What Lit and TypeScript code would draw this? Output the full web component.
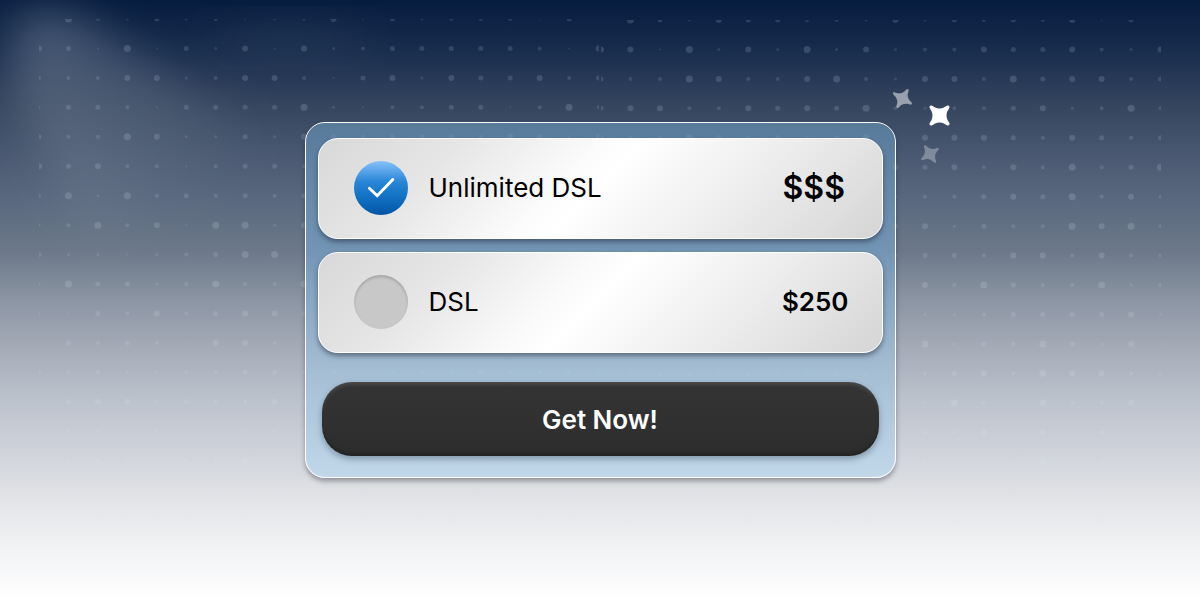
import { LitElement, html, css, svg } from "lit";
import { customElement, property, state } from "lit/decorators.js";

/* Dot sizes, one digit per grid cell, in half pixels of radius; 0 leaves the cell empty. */
const LEFT_DOTS = [
  "07435342336253444250",
  "65272536263455555426",
  "44466346642563655645",
  "35542555573244552474",
  "54476335365455546535",
  "65644245544345345435",
  "47374545454535453545",
  "34746277364535435353",
  "53323457705345345345",
  "37553474474535435345",
  "32546456654353453453",
  "25454266434535345345",
  "44433445545345465454",
  "35663544643545354354",
  "54334334453454354353",
  "45654556445354565435",
  "55434354534543453453",
  "43454344345434543454",
];
const RIGHT_DOTS = [
  "07536554436354546250",
  "66273637363446556436",
  "54476446743664756645",
  "56644656574344563474",
  "54475453570666546545",
  "54354535456564647457",
  "43545354353445657464",
  "54354354355635447674",
  "35435435434554664644",
  "54354354353647544734",
  "43543543543334555563",
  "54354354354735475363",
  "54543544553456476644",
  "43543543543374074463",
  "35435435433547364534",
  "54565434465543573535",
  "43454345345634345543",
  "45434543454345434543",
];
const PITCH = 29.45;

const dots = (rows: string[], x: number, y: number) =>
  rows.flatMap((row, r) =>
    [...row].map((d, c) =>
      d === "0"
        ? null
        : svg`<circle cx=${(x + c * PITCH).toFixed(2)} cy=${(y + r * PITCH).toFixed(2)} r=${Number(d) / 2}
            fill-opacity=${0.09 + Number(d) * 0.011} />`
    )
  );

@customElement("night-backdrop")
class NightBackdrop extends LitElement {
  static styles = css`
    :host {
      position: absolute;
      inset: 0;
      overflow: hidden;
      display: flex;
      justify-content: center;
      background: linear-gradient(
        #061c3f 0%,
        #1a2e4e 9%,
        #36465f 18%,
        #4a5971 26%,
        #5b6a80 34%,
        #6d798a 42%,
        #8b95a3 50%,
        #a5abb7 58%,
        #bac1cb 66%,
        #cfd2da 75%,
        #e1e3e6 83%,
        #f1f2f4 91%,
        #ffffff 100%
      );
    }
    .scene {
      flex: none;
      width: 1200px;
      height: 600px;
    }
  `;

  render() {
    return html`
      <svg class="scene" viewBox="0 0 1200 600" aria-hidden="true">
        <defs>
          <filter id="soft" x="-50%" y="-50%" width="200%" height="200%">
            <feGaussianBlur stdDeviation="22" />
          </filter>
          <linearGradient id="beam" gradientUnits="userSpaceOnUse" x1="30" y1="20" x2="160" y2="220">
            <stop offset="0" stop-color="#dfe8ee" stop-opacity=".28" />
            <stop offset=".35" stop-color="#dfe8ee" stop-opacity=".17" />
            <stop offset=".7" stop-color="#dfe8ee" stop-opacity=".08" />
            <stop offset="1" stop-color="#dfe8ee" stop-opacity="0" />
          </linearGradient>
          <clipPath id="left"><rect x="39" y="19" width="560" height="520" /></clipPath>
          <clipPath id="right"><rect x="601" y="20" width="560" height="520" /></clipPath>
        </defs>
        <path d="M16 12 70 12 280 140 240 240 80 230 14 90Z" fill="url(#beam)" filter="url(#soft)" />
        <ellipse cx="290" cy="38" rx="80" ry="16" fill="#fff" fill-opacity=".05" filter="url(#soft)" />
        <g fill="#dce6f5" clip-path="url(#left)">${dots(LEFT_DOTS, 39, 19)}</g>
        <g fill="#dce6f5" clip-path="url(#right)">${dots(RIGHT_DOTS, 601, 20)}</g>
      </svg>
    `;
  }
}

@customElement("plan-option")
class PlanOption extends LitElement {
  @property() name = "";
  @property() price = "";
  @property({ type: Boolean }) large = false;
  @property({ type: Boolean }) checked = false;

  static styles = css`
    :host {
      display: block;
    }
    .option {
      box-sizing: border-box;
      min-height: 101px;
      display: flex;
      align-items: center;
      gap: 21px;
      padding: 0 33px 1px 35px;
      border: 1px solid #fff;
      border-radius: 20px;
      background: linear-gradient(135deg, #d8d8d8 0%, #e6e6e6 22%, #fbfbfb 43%, #ffffff 49%, #ededed 72%, #d5d5d5 100%);
      box-shadow: 0 3px 5px rgba(30, 40, 55, 0.5);
      font-size: 26px;
      line-height: 32px;
      color: #000;
      cursor: pointer;
    }
    .mark {
      flex: none;
      display: grid;
      width: 54px;
      height: 54px;
    }
    .radio {
      grid-area: 1 / 1;
      appearance: none;
      margin: 0;
      width: 54px;
      height: 54px;
      border-radius: 50%;
      background: #c8c8c8;
      box-shadow: inset 0 2px 3px rgba(0, 0, 0, 0.18);
      cursor: pointer;
    }
    .radio:checked {
      background: linear-gradient(#86c1fb 0%, #2a86d6 38%, #1676c8 60%, #0156a6 100%);
      box-shadow: none;
    }
    .check {
      grid-area: 1 / 1;
      width: 54px;
      height: 54px;
      pointer-events: none;
    }
    .name {
      flex: 1;
    }
    .price {
      min-width: 66px;
      font-weight: 600;
    }
    .large {
      font-size: 32px;
    }
  `;

  private pick() {
    this.dispatchEvent(new CustomEvent("pick", { bubbles: true, composed: true }));
  }

  render() {
    return html`
      <label class="option" for="radio">
        <span class="mark">
          <input class="radio" id="radio" type="radio" .checked=${this.checked} @change=${this.pick} />
          ${this.checked
            ? html`<svg class="check" viewBox="0 0 54 54" aria-hidden="true">
                <path d="M15.4 27.3 23.2 34.8 38.8 18.6" fill="none" stroke="#fff" stroke-width="2.9" stroke-linecap="round" stroke-linejoin="miter" />
              </svg>`
            : null}
        </span>
        <span class="name">${this.name}</span>
        <span class="price ${this.large ? "large" : ""}">${this.price}</span>
      </label>
    `;
  }
}

@customElement("app-root")
class AppRoot extends LitElement {
  @state() private selected = 0;

  private plans = [
    { name: "Unlimited DSL", price: "$$$", large: true },
    { name: "DSL", price: "$250", large: false },
  ];

  static styles = css`
    :host {
      position: relative;
      display: grid;
      place-items: center;
      min-height: 100vh;
      font-family: Inter, sans-serif;
    }
    .card {
      position: relative;
      box-sizing: border-box;
      width: min(591px, 100% - 32px);
      display: flex;
      flex-direction: column;
      gap: 29px;
      padding: 15px 12px 21px;
      border: 1px solid #fff;
      border-radius: 20px;
      background: linear-gradient(
        rgba(107, 153, 189, 0.6) 0%,
        rgba(118, 167, 208, 0.6) 35%,
        rgba(155, 193, 222, 0.6) 68%,
        rgba(177, 212, 239, 0.6) 100%
      );
      background-clip: padding-box;
      box-shadow: 0 3px 5px rgba(30, 35, 45, 0.4);
    }
    .plans {
      display: flex;
      flex-direction: column;
      gap: 13px;
    }
    .buy {
      margin: 0 4px;
      height: 74px;
      padding: 2px 0 0;
      border: 0;
      border-radius: 30px;
      background: linear-gradient(#343434, #2d2d2d);
      box-shadow:
        inset 0 4px 4px -2px rgba(255, 255, 255, 0.14),
        inset 0 -4px 4px -2px rgba(0, 0, 0, 0.3),
        0 3px 6px rgba(40, 60, 80, 0.4);
      color: #fff;
      font: 600 26px/32px Inter, sans-serif;
      cursor: pointer;
    }
    .stars {
      position: absolute;
      top: -41px;
      right: -68px;
      width: 70px;
      height: 90px;
      pointer-events: none;
    }
  `;

  render() {
    return html`
      <night-backdrop></night-backdrop>
      <main class="card">
        <div class="plans" role="radiogroup" aria-label="Plans">
          ${this.plans.map(
            (p, i) => html`<plan-option
              .name=${p.name}
              .price=${p.price}
              .large=${p.large}
              .checked=${this.selected === i}
              @pick=${() => (this.selected = i)}
            ></plan-option>`
          )}
        </div>
        <button class="buy" type="button">Get Now!</button>
        <svg class="stars" viewBox="0 0 70 90" aria-hidden="true">
          <defs>
            <path
              id="star"
              d="M-9.7-7.3C-10.7-9.3-9.3-10.7-7.3-9.7L-4.4-8C-1.8-6.7 1.8-6.7 4.4-8L7.3-9.7C9.3-10.7 10.7-9.3 9.7-7.3L8-4.4C6.7-1.8 6.7 1.8 8 4.4L9.7 7.3C10.7 9.3 9.3 10.7 7.3 9.7L4.4 8C1.8 6.7-1.8 6.7-4.4 8L-7.3 9.7C-9.3 10.7-10.7 9.3-9.7 7.3L-8 4.4C-6.7 1.8-6.7-1.8-8-4.4Z"
            />
          </defs>
          <use href="#star" fill="#fff" transform="translate(46.5 33.5)" />
          <use href="#star" fill="#fff" fill-opacity=".5" transform="translate(9.5 16.5) rotate(-14) scale(.8)" />
          <use href="#star" fill="#fff" fill-opacity=".3" transform="translate(37 72) rotate(12) scale(.76)" />
        </svg>
      </main>
    `;
  }
}
